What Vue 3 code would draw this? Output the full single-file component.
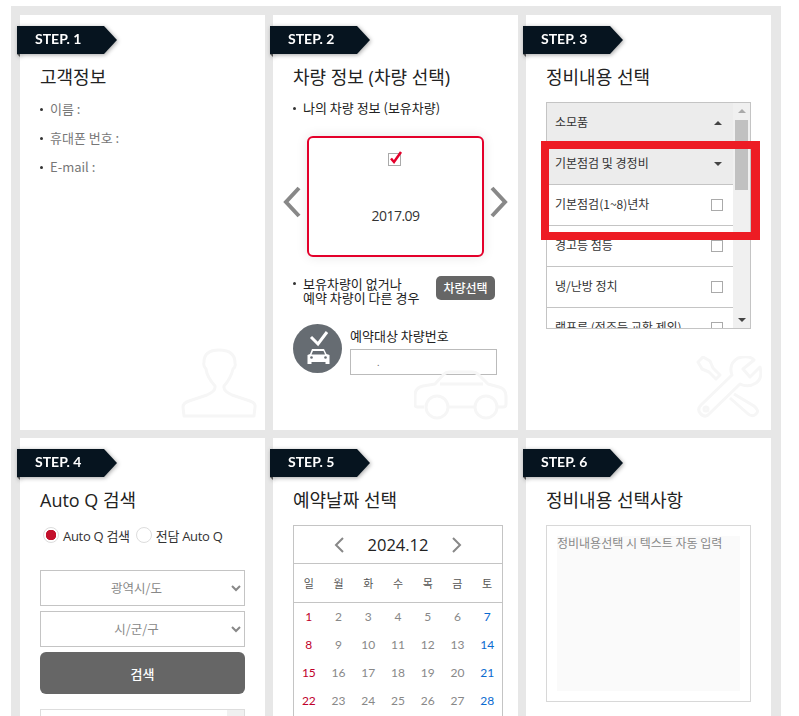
<script setup>
const weekdays = ['일', '월', '화', '수', '목', '금', '토']
const days = Array.from({ length: 31 }, (_, i) => i + 1)
const dayClass = (d) => (d % 7 === 1 ? 'sun' : d % 7 === 0 ? 'sat' : '')
const items = ['기본점검(1~8)년차', '경고등 점등', '냉/난방 정치', '램프류 (전조등 교환 제외)']
</script>

<template>
  <div class="page">
    <div class="board">
      <section class="card">
        <div class="tag"><span>STEP. 1</span></div>
        <h2>고객정보</h2>
        <ul class="info">
          <li>이름 :</li>
          <li>휴대폰 번호 :</li>
          <li>E-mail :</li>
        </ul>
        <svg class="mark mark-user" width="80" height="75" viewBox="0 0 80 75" fill="none" stroke="#f6f6f6" stroke-width="3" stroke-linejoin="round">
          <path d="M4 71 L3 62 Q3 58 9 56 L27 50 Q36 46 35 41 Q27 32 26 24 Q23 21 24 17 Q24 5 39 5 Q55 5 55 18 Q56 22 53 24 Q51 33 44 41 Q43 46 52 50 L70 56 Q76 58 75 62 L74 71 Z" />
        </svg>
      </section>

      <section class="card">
        <div class="tag"><span>STEP. 2</span></div>
        <h2>차량 정보 (차량 선택)</h2>
        <ul class="info dark first"><li>나의 차량 정보 (보유차량)</li></ul>
        <svg class="mark mark-car" width="94" height="50" viewBox="0 0 94 50" fill="none" stroke="#f6f6f6" stroke-width="3" stroke-linejoin="round">
          <path d="M10 37 H3 Q1 37 1 34 V25 Q1 18 9 16 L21 14 L30 4 Q32 2 36 2 H58 Q62 2 65 5 L74 14 L85 17 Q92 19 92 26 V34 Q92 37 89 37 H84" />
          <path d="M35 37 H60" />
          <circle cx="23" cy="37" r="11" />
          <circle cx="72" cy="37" r="11" />
          <path d="M26 14 H69" />
        </svg>
        <div class="carousel">
          <svg class="arrow" width="18" height="32" viewBox="0 0 18 32" fill="none" stroke="#888" stroke-width="4"><path d="M16 2 L3 16 L16 30" /></svg>
          <div class="car-card">
            <svg class="car-check" width="15" height="16" viewBox="0 0 15 16" fill="none">
              <rect x="0.5" y="3.5" width="12" height="12" stroke="#aaa" fill="#fff" />
              <path d="M3 8.5 L6 12 L13 2" stroke="#e4002b" stroke-width="2.500" />
            </svg>
            <span class="car-year">2017.09</span>
          </div>
          <svg class="arrow" width="18" height="32" viewBox="0 0 18 32" fill="none" stroke="#888" stroke-width="4"><path d="M2 2 L15 16 L2 30" /></svg>
        </div>
        <div class="other">
          <ul class="info dark tight"><li>보유차량이 없거나<br />예약 차량이 다른 경우</li></ul>
          <button class="pick" type="button">차량선택</button>
        </div>
        <div class="plate">
          <svg width="49" height="49" viewBox="0 0 49 49">
            <circle cx="24.5" cy="24.5" r="24.5" fill="#666c72" />
            <path d="M18 13 L25 20 L34 8" fill="none" stroke="#fff" stroke-width="3" />
            <path d="M19 25 H31 L33.500 30 L36.500 31 V40 H32.500 V38 H18.500 V40 H14.500 V31 L17 30 Z" fill="#fff" />
            <path d="M20 27 H30.500 L32 30.500 H18.500 Z" fill="#666c72" />
            <circle cx="18.500" cy="33.500" r="1.300" fill="#666c72" />
            <circle cx="32.500" cy="33.500" r="1.300" fill="#666c72" />
          </svg>
          <div class="plate-body">
            <label>예약대상 차량번호</label>
            <div class="plate-input">.</div>
          </div>
        </div>
      </section>

      <section class="card">
        <div class="tag"><span>STEP. 3</span></div>
        <h2>정비내용 선택</h2>
        <div class="picker">
          <div class="picker-list">
            <div class="row head"><span>소모품</span><i class="up"></i></div>
            <div class="row head"><span>기본점검 및 경정비</span><i class="down"></i></div>
            <div v-for="item in items" :key="item" class="row">
              <span>{{ item }}</span><b class="box"></b>
            </div>
          </div>
          <div class="scroll">
            <i class="up small"></i>
            <div class="thumb"></div>
            <i class="down small"></i>
          </div>
          <div class="highlight"></div>
        </div>
        <svg class="mark mark-tools" width="66" height="62" viewBox="0 0 66 62" fill="none" stroke="#f6f6f6" stroke-width="3" stroke-linejoin="round">
          <path d="M2 6 L7 1 L14 5 L17 12 L24 19 L20 23 L13 16 L6 13 Z" />
          <path d="M38 38 L58 50 Q64 55 60 58 Q56 62 51 57 L34 42" />
          <path d="M42 2 Q54 -1 58 4 L47 13 L54 21 L64 11 Q67 22 60 27 Q52 32 44 28 L12 59 Q8 62 4 57 Q1 53 5 49 L36 19 Q32 8 42 2 Z" />
          <circle cx="10" cy="53" r="2" />
        </svg>
      </section>

      <section class="card">
        <div class="tag"><span>STEP. 4</span></div>
        <h2>Auto Q 검색</h2>
        <div class="radios">
          <span class="radio on"></span><span>Auto Q 검색</span>
          <span class="radio second"></span><span>전담 Auto Q</span>
        </div>
        <select class="sel"><option>광역시/도</option></select>
        <select class="sel"><option>시/군/구</option></select>
        <button class="search" type="button">검색</button>
        <div class="results"><div class="results-bar"></div></div>
      </section>

      <section class="card">
        <div class="tag"><span>STEP. 5</span></div>
        <h2>예약날짜 선택</h2>
        <div class="calendar">
          <div class="cal-head">
            <svg width="12" height="16" viewBox="0 0 12 16" fill="none" stroke="#888" stroke-width="2"><path d="M10 1 L3 8 L10 15" /></svg>
            <strong>2024.12</strong>
            <svg width="12" height="16" viewBox="0 0 12 16" fill="none" stroke="#888" stroke-width="2"><path d="M2 1 L9 8 L2 15" /></svg>
          </div>
          <div class="cal-week">
            <span v-for="w in weekdays" :key="w">{{ w }}</span>
          </div>
          <div class="cal-days">
            <span v-for="d in days" :key="d" :class="dayClass(d)">{{ d }}</span>
          </div>
        </div>
      </section>

      <section class="card">
        <div class="tag"><span>STEP. 6</span></div>
        <h2>정비내용 선택사항</h2>
        <div class="summary">
          <div class="summary-text">정비내용선택 시 텍스트 자동 입력</div>
        </div>
      </section>
    </div>
  </div>
</template>

<style>
html, body { margin: 0; background: #fff; overflow: hidden; }
</style>

<style scoped>
.page {
  height: 716px;
  overflow: hidden;
  padding: 6px 18px 0 11px;
  box-sizing: border-box;
  font-family: "Noto Sans CJK KR", "Open Sans", sans-serif;
  color: #222;
}
.board {
  background: #e7e7e7;
  padding: 9px 10px 0 9px;
  display: grid;
  grid-template-columns: repeat(3, 245px);
  grid-template-rows: 415px 400px;
  gap: 8px;
  width: 770px;
  box-sizing: border-box;
}
.card {
  position: relative;
  background: #fff;
  padding: 11px 20px 0;
  box-sizing: border-box;
}
.tag {
  position: relative;
  width: 100px;
  height: 28px;
  margin-left: -23px;
  filter: drop-shadow(1px 1px 2px rgba(0, 0, 0, .35));
}
.tag::before {
  content: "";
  position: absolute;
  inset: 0;
  background: #06141f;
  clip-path: polygon(0 0, 87px 0, 100px 14px, 87px 28px, 0 28px);
}
.tag::after {
  content: "";
  position: absolute;
  left: 0;
  top: 28px;
  border-top: 3px solid #555;
  border-left: 3px solid transparent;
}
.tag span {
  position: relative;
  display: block;
  padding-left: 18px;
  font: 700 14px/26px Lato, sans-serif;
  color: #fff;
}
h2 {
  margin: 11px 0 0;
  font-size: 18px;
  font-weight: 400;
  line-height: 24px;
  color: #222;
  font-family: "Open Sans", "Noto Sans CJK KR", sans-serif;
}
.info {
  list-style: none;
  margin: 9px 0 0;
  padding: 0;
  font-size: 13px;
  color: #777;
}
.info li {
  position: relative;
  padding-left: 10px;
  height: 29px;
  line-height: 22px;
}
.info li::before {
  content: "";
  position: absolute;
  left: 0;
  top: 10px;
  width: 3px;
  height: 3px;
  border-radius: 50%;
  background: #333;
}
.info.dark { color: #222; }
.info.first { margin-top: 8px; }
.info.first li { height: 22px; }
.info.tight li { line-height: 14px; height: 28px; }
.info.tight li::before { top: 5px; }
.info.tight { margin: 0; }
.carousel {
  display: flex;
  align-items: center;
  gap: 6px;
  width: 225px;
  margin: 17px 0 0 -10px;
}
.arrow { margin-top: 10px; }
.car-card {
  width: 177px;
  height: 121px;
  box-sizing: border-box;
  border: 2px solid #e4002b;
  border-radius: 6px;
  box-shadow: 0 0 12px rgba(0, 0, 0, .1);
  background: #fff;
  display: flex;
  flex-direction: column;
  align-items: center;
}
.car-check { margin-top: 12px; }
.car-year { margin-top: 40px; font: 14px/20px "Open Sans", sans-serif; color: #333; letter-spacing: -.5px; }
.other {
  display: flex;
  justify-content: space-between;
  align-items: flex-start;
  margin-top: 20px;
  margin-right: 3px;
}
.pick {
  width: 59px;
  height: 24px;
  margin: -1px 0 0;
  padding: 0;
  border: 0;
  border-radius: 5px;
  background: #666;
  color: #fff;
  font: 500 12px/24px "Noto Sans CJK KR", sans-serif;
}
.plate {
  display: flex;
  gap: 8px;
  margin-top: 19px;
}
.plate-body label {
  display: block;
  font-size: 13px;
  line-height: 16px;
  margin-top: 4px;
}
.plate-input {
  width: 147px;
  height: 26px;
  margin-top: 5px;
  box-sizing: border-box;
  border: 1px solid #bbb;
  background: #fff;
  padding-left: 26px;
  font-size: 9px;
  line-height: 26px;
  color: #777;
}
.mark { position: absolute; }
.mark-user { right: 5px; bottom: 10px; }
.mark-car { right: 10px; bottom: 10px; }
.mark-tools { right: 9px; bottom: 12px; }
.picker {
  position: relative;
  display: flex;
  width: 205px;
  height: 227px;
  margin-top: 13px;
  box-sizing: border-box;
  border: 1px solid #c4c4c4;
}
.picker-list { flex: 1; overflow: hidden; }
.row {
  height: 41px;
  box-sizing: border-box;
  border-bottom: 1px solid #c4c4c4;
  display: flex;
  align-items: center;
  justify-content: space-between;
  padding: 0 10px 3px 8px;
  font-size: 12px;
  color: #333;
}
.row.head { background: #ececec; border-bottom-color: #ececec; }
.row.head:nth-child(2) { border-bottom-color: #c4c4c4; }
.up, .down {
  width: 0;
  height: 0;
  margin-right: 1px;
  border-left: 4px solid transparent;
  border-right: 4px solid transparent;
}
.up { border-bottom: 4px solid #444; margin-top: 3px; }
.down { border-top: 4px solid #444; margin-top: 3px; }
.box {
  width: 12px;
  height: 12px;
  margin-top: 3px;
  border: 1px solid #aaa;
  box-sizing: border-box;
}
.scroll {
  position: relative;
  width: 17px;
  background: #f0f0f0;
  display: flex;
  flex-direction: column;
  align-items: center;
}
.small { margin: 6px 0 0; }
.scroll .up { border-bottom-color: #aaa; }
.scroll .down { margin: auto 0 6px; }
.thumb {
  width: 13px;
  height: 70px;
  margin-top: 7px;
  background: #c1c1c1;
}
.highlight {
  position: absolute;
  left: -6px;
  top: 38px;
  width: 219px;
  height: 99px;
  box-sizing: border-box;
  border: 8px solid #ed1c24;
  border-right-width: 9px;
}
.radios {
  display: flex;
  align-items: center;
  margin-top: 13px;
  height: 20px;
  font-size: 13px;
  color: #333;
  font-family: "Open Sans", "Noto Sans CJK KR", sans-serif;
  letter-spacing: -.3px;
}
.radio {
  width: 16px;
  height: 16px;
  box-sizing: border-box;
  border: 1px solid #ddd;
  border-radius: 50%;
  background: #fff;
  margin: 0 4px 0 3px;
  flex: none;
}
.radio.second { margin-left: 6px; }
.radio.on {
  background: radial-gradient(circle, #c3112c 0 5px, #fff 5.500px);
}
.sel {
  display: block;
  width: 205px;
  height: 36px;
  margin: 0 0 5px;
  padding: 0 0 2px;
  box-sizing: border-box;
  border: 1px solid #c4c4c4;
  background: #fff;
  text-align: center;
  font-family: "Noto Sans CJK KR", sans-serif;
  font-size: 12.500px;
  color: #888;
}
.radios + .sel { margin-top: 25px; }
.search {
  display: block;
  width: 205px;
  height: 42px;
  border: 0;
  border-radius: 6px;
  background: #666;
  color: #fff;
  font: 500 13px/42px "Noto Sans CJK KR", sans-serif;
}
.results {
  width: 205px;
  height: 120px;
  margin-top: 15px;
  box-sizing: border-box;
  border: 1px solid #ddd;
  display: flex;
  justify-content: flex-end;
}
.results-bar { width: 17px; background: #f0f0f0; }
.calendar {
  width: 210px;
  margin-top: 13px;
  box-sizing: border-box;
  border: 1px solid #c4c4c4;
}
.cal-head {
  height: 38px;
  box-sizing: border-box;
  border-bottom: 1px solid #c4c4c4;
  display: flex;
  align-items: center;
  justify-content: center;
  gap: 23px;
}
.cal-head strong {
  font: 400 16.500px/24px "Open Sans", sans-serif;
  color: #222;
}
.cal-week, .cal-days {
  display: grid;
  grid-template-columns: repeat(7, 1fr);
  text-align: center;
}
.cal-week {
  height: 39px;
  box-sizing: border-box;
  border-bottom: 1px solid #c4c4c4;
  align-items: center;
  font-size: 11px;
  color: #555;
}
.cal-days {
  grid-auto-rows: 28px;
  align-items: center;
  font: 12px/28px Lato, sans-serif;
  color: #888;
}
.sun { color: #c0002b; }
.sat { color: #0a6ad0; }
.summary {
  width: 205px;
  height: 177px;
  margin-top: 13px;
  box-sizing: border-box;
  border: 1px solid #d8d8d8;
  padding: 10px;
}
.summary-text {
  height: 155px;
  background: #fafafa;
  font-size: 12px;
  line-height: 13px;
  color: #888;
}
</style>
